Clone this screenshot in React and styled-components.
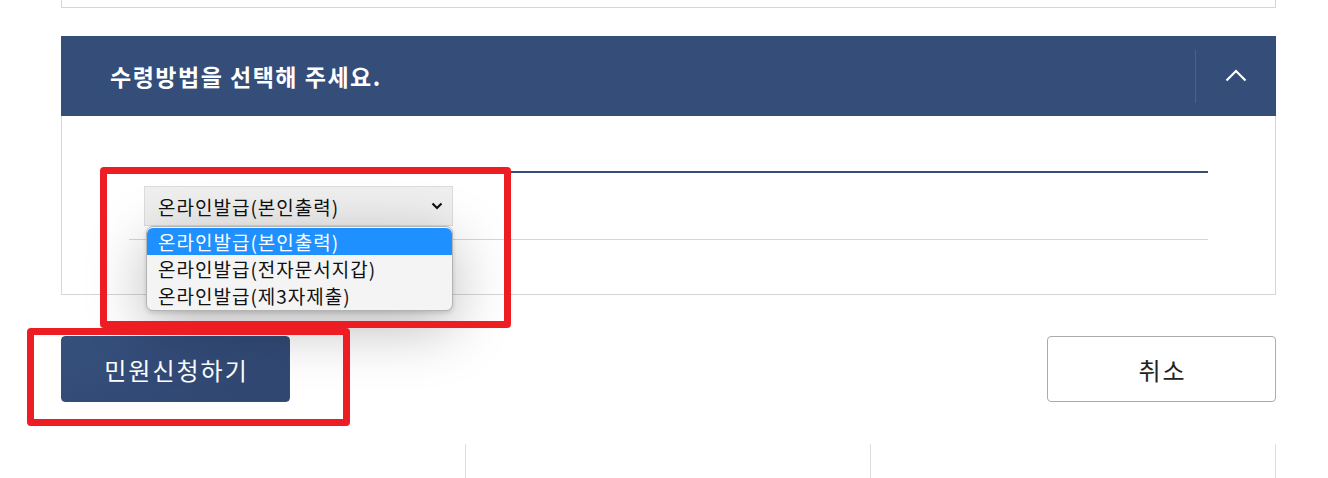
import React from "react";
import styled, { createGlobalStyle } from "styled-components";

const GlobalStyle = createGlobalStyle`
  html, body { margin: 0; padding: 0; background: #fff; }
  body { font-family: "Noto Sans CJK KR", "Noto Sans", sans-serif; color: #222; }
`;

const NAVY = "#344d79";
const LINE = "#d6d6d6";

const Stage = styled.div`
  position: relative;
  width: 1328px;
  height: 478px;
  overflow: hidden;
`;

const Page = styled.div`
  width: 1215px;
  margin-left: 61px;
  display: flex;
  flex-direction: column;
`;

const TopCard = styled.div`
  height: 8px;
  border: 1px solid ${LINE};
  border-top: none;
  box-sizing: border-box;
`;

const Section = styled.section`
  margin-top: 28px;
  display: flex;
  flex-direction: column;
`;

const Header = styled.div`
  height: 80px;
  background: ${NAVY};
  display: flex;
  align-items: center;
  justify-content: space-between;
  padding-left: 49px;
`;

const Title = styled.h2`
  margin: 0;
  font-size: 23px;
  font-weight: 700;
  color: #fff;
  letter-spacing: 1.5px;
`;

const Toggle = styled.div`
  height: 100%;
  display: flex;
  align-items: center;
`;

const Divider = styled.span`
  width: 1px;
  height: 53px;
  background: #4a6290;
`;

const ToggleButton = styled.button`
  width: 80px;
  height: 100%;
  border: none;
  background: transparent;
  display: flex;
  align-items: center;
  justify-content: center;
  padding: 0 0 2px;
  cursor: pointer;
`;

const Body = styled.div`
  border: 1px solid ${LINE};
  border-top: none;
  padding: 55px 67px 54px;
`;

const Table = styled.div`
  border-top: 2px solid ${NAVY};
`;

const Row = styled.div`
  padding: 13px 15px;
  border-bottom: 1px solid ${LINE};
`;

const SelectWrap = styled.div`
  position: relative;
  width: 309px;
`;

const SelectBox = styled.div`
  height: 40px;
  box-sizing: border-box;
  border: 1px solid #dcdcdc;
  background: #efefef;
  display: flex;
  align-items: center;
  justify-content: space-between;
  padding: 0 9px 0 13px;
  font-size: 19px;
  letter-spacing: 1px;
  color: #111;
`;

const Popup = styled.ul`
  position: absolute;
  top: 40px;
  left: 2px;
  width: 307px;
  box-sizing: border-box;
  margin: 0;
  padding: 1px 0 1px;
  list-style: none;
  background: #f4f4f4;
  border: 1px solid #b4b4b4;
  border-radius: 7px;
  box-shadow: 0 16px 60px rgba(0, 0, 0, 0.28), 0 2px 4px rgba(0, 0, 0, 0.14);
  overflow: hidden;
  z-index: 2;
`;

const Option = styled.li`
  height: 27px;
  line-height: 27px;
  padding-left: 11px;
  font-size: 19px;
  letter-spacing: 1px;
  color: ${(p) => (p.$active ? "#fff" : "#111")};
  background: ${(p) => (p.$active ? "#1e90ff" : "transparent")};
  border-radius: ${(p) => (p.$active ? "6px 6px 0 0" : "0")};
`;

const Actions = styled.div`
  margin-top: 41px;
  display: flex;
  justify-content: space-between;
`;

const Button = styled.button`
  width: 229px;
  height: 66px;
  border-radius: 4px;
  font-family: "Noto Sans CJK KR", sans-serif;
  font-size: 24px;
  letter-spacing: 2px;
  padding: 0 0 0 2px;
  cursor: pointer;
  border: 1px solid ${(p) => (p.$primary ? NAVY : "#ababab")};
  background: ${(p) =>
    p.$primary ? "linear-gradient(160deg, #36507d 0%, #2f4670 100%)" : "#fff"};
  color: ${(p) => (p.$primary ? "#fff" : "#222")};
`;

const Footer = styled.div`
  margin-top: 42px;
  display: grid;
  grid-template-columns: repeat(3, 1fr);
  height: 60px;
`;

const FooterCell = styled.div`
  border-right: 1px solid #dedede;
`;

const Mark = styled.div`
  position: absolute;
  box-sizing: border-box;
  border: 7px solid #ee1d24;
  border-radius: 4px;
  pointer-events: none;
  z-index: 3;
`;

const ChevronUp = () => (
  <svg width="22" height="13" viewBox="0 0 22 13" fill="none">
    <path d="M1.5 11.5 L11 2 L20.5 11.5" stroke="#fff" strokeWidth="2.2" />
  </svg>
);

const ChevronDown = () => (
  <svg width="12" height="8" viewBox="0 0 12 8" fill="none">
    <path d="M1.5 1.5 L6 6 L10.5 1.5" stroke="#111" strokeWidth="2.2" />
  </svg>
);

const options = ["온라인발급(본인출력)", "온라인발급(전자문서지갑)", "온라인발급(제3자제출)"];

export default function App() {
  return (
    <Stage>
      <GlobalStyle />
      <Page>
        <TopCard />
        <Section>
          <Header>
            <Title>수령방법을 선택해 주세요.</Title>
            <Toggle>
              <Divider />
              <ToggleButton aria-label="접기">
                <ChevronUp />
              </ToggleButton>
            </Toggle>
          </Header>
          <Body>
            <Table>
              <Row>
                <SelectWrap>
                  <SelectBox>
                    <span>{options[0]}</span>
                    <ChevronDown />
                  </SelectBox>
                  <Popup>
                    {options.map((o, i) => (
                      <Option key={o} $active={i === 0}>
                        {o}
                      </Option>
                    ))}
                  </Popup>
                </SelectWrap>
              </Row>
            </Table>
          </Body>
        </Section>
        <Actions>
          <Button $primary>민원신청하기</Button>
          <Button>취소</Button>
        </Actions>
        <Footer>
          <FooterCell />
          <FooterCell />
          <FooterCell />
        </Footer>
      </Page>
      <Mark style={{ left: 100, top: 167, width: 411, height: 161 }} />
      <Mark style={{ left: 27, top: 328, width: 323, height: 98 }} />
    </Stage>
  );
}
